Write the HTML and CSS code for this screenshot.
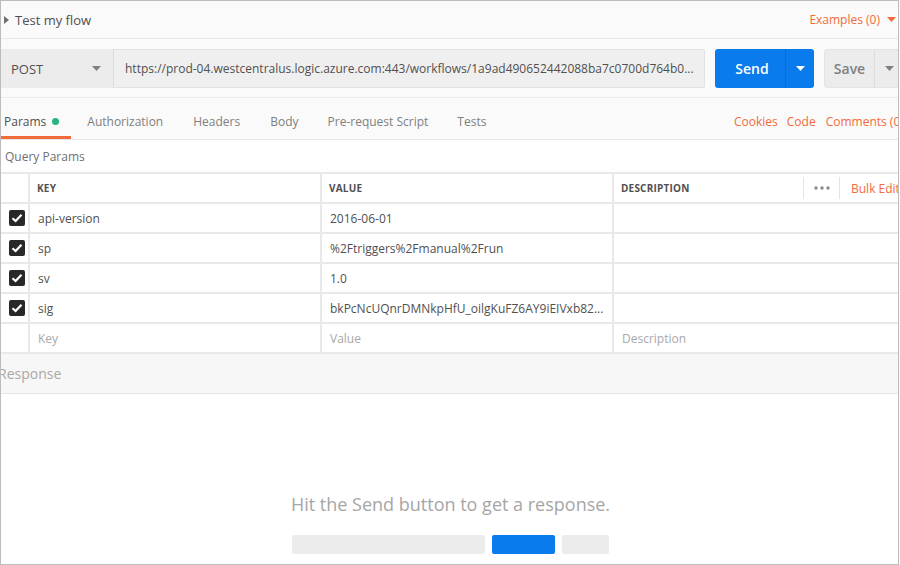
FILE: index.html
```html
<!DOCTYPE html>
<html>
<head>
<meta charset="utf-8">
<link rel="stylesheet" href="styles.css">
</head>
<body>
<div class="frame">
  <div class="topbar">
    <div class="title"><svg class="tri-right" width="6" height="8" viewBox="0 0 6 8"><path d="M0 0 L5 4 L0 8 Z" fill="#707070"/></svg><span>Test my flow</span></div>
    <div class="examples">Examples (0) <svg width="9" height="6" viewBox="0 0 9 6"><path d="M0 0 H9 L4.5 5 Z" fill="#f26b3a"/></svg></div>
  </div>

  <div class="urlrow">
    <div class="method"><span>POST</span><svg width="9" height="5" viewBox="0 0 9 5"><path d="M0 0 H9 L4.5 5 Z" fill="#808080"/></svg></div>
    <div class="url">https://prod-04.westcentralus.logic.azure.com:443/workflows/1a9ad490652442088ba7c0700d764b0...</div>
    <div class="send"><span class="send-label">Send</span><span class="send-drop"><svg width="9" height="5" viewBox="0 0 9 5"><path d="M0 0 H9 L4.5 5 Z" fill="#ffffff"/></svg></span></div>
    <div class="save"><span class="save-label">Save</span><span class="save-drop"><svg width="9" height="5" viewBox="0 0 9 5"><path d="M0 0 H9 L4.5 5 Z" fill="#808080"/></svg></span></div>
  </div>

  <div class="tabs">
    <div class="tabs-left">
      <div class="tab active">Params<span class="dot"></span></div>
      <div class="tab">Authorization</div>
      <div class="tab">Headers</div>
      <div class="tab">Body</div>
      <div class="tab">Pre-request Script</div>
      <div class="tab">Tests</div>
    </div>
    <div class="tabs-right">
      <span>Cookies</span><span>Code</span><span>Comments (0)</span>
    </div>
  </div>

  <div class="qp">Query Params</div>

  <div class="grid">
    <div class="cell"></div>
    <div class="cell head">KEY</div>
    <div class="cell head">VALUE</div>
    <div class="cell head desc-head">
      <span class="desc-label">DESCRIPTION</span>
      <span class="sep"></span>
      <span class="dots"><svg width="16" height="4" viewBox="0 0 16 4"><circle cx="2" cy="2" r="1.7" fill="#8a8a8a"/><circle cx="8" cy="2" r="1.7" fill="#8a8a8a"/><circle cx="14" cy="2" r="1.7" fill="#8a8a8a"/></svg></span>
      <span class="sep"></span>
      <span class="bulk">Bulk Edit</span>
    </div>

    <div class="cell cb"><span class="check"><svg width="12" height="10" viewBox="0 0 12 10"><path d="M1.5 5.2 L4.6 8 L10.5 1.8" fill="none" stroke="#fff" stroke-width="2.2"/></svg></span></div>
    <div class="cell">api-version</div>
    <div class="cell">2016-06-01</div>
    <div class="cell"></div>

    <div class="cell cb"><span class="check"><svg width="12" height="10" viewBox="0 0 12 10"><path d="M1.5 5.2 L4.6 8 L10.5 1.8" fill="none" stroke="#fff" stroke-width="2.2"/></svg></span></div>
    <div class="cell">sp</div>
    <div class="cell">%2Ftriggers%2Fmanual%2Frun</div>
    <div class="cell"></div>

    <div class="cell cb"><span class="check"><svg width="12" height="10" viewBox="0 0 12 10"><path d="M1.5 5.2 L4.6 8 L10.5 1.8" fill="none" stroke="#fff" stroke-width="2.2"/></svg></span></div>
    <div class="cell">sv</div>
    <div class="cell">1.0</div>
    <div class="cell"></div>

    <div class="cell cb"><span class="check"><svg width="12" height="10" viewBox="0 0 12 10"><path d="M1.5 5.2 L4.6 8 L10.5 1.8" fill="none" stroke="#fff" stroke-width="2.2"/></svg></span></div>
    <div class="cell">sig</div>
    <div class="cell">bkPcNcUQnrDMNkpHfU_oilgKuFZ6AY9iEIVxb82...</div>
    <div class="cell"></div>

    <div class="cell"></div>
    <div class="cell ph">Key</div>
    <div class="cell ph">Value</div>
    <div class="cell ph">Description</div>
  </div>

  <div class="response">Response</div>

  <div class="empty">
    <div class="msg">Hit the Send button to get a response.</div>
    <div class="skel">
      <span class="sk sk1"></span><span class="sk sk2"></span><span class="sk sk3"></span>
    </div>
  </div>
</div>
</body>
</html>
```

FILE: styles.css
```css
* { box-sizing: border-box; }
html, body { margin: 0; padding: 0; background: #ffffff; }
body { font-family: "Open Sans", "Noto Sans", sans-serif; color: #505050; }

.frame {
  width: 899px;
  height: 565px;
  border: 1px solid #bcbcbc;
  overflow: hidden;
  background: #fafafa;
  display: flex;
  flex-direction: column;
}

/* top bar */
.topbar {
  height: 38px;
  flex: 0 0 38px;
  display: flex;
  align-items: center;
  justify-content: space-between;
  border-bottom: 1px solid #e8e8e8;
  padding: 0 2px 0 3px;
}
.title { display: flex; align-items: center; font-size: 13px; color: #505050; }
.tri-right { margin-right: 5px; }
.examples { display: flex; align-items: center; gap: 7px; font-size: 12px; color: #f26b3a; }

/* url row */
.urlrow {
  flex: 0 0 59px;
  display: flex;
  align-items: flex-start;
  padding-top: 10px;
  border-bottom: 1px solid #ececec;
}
.urlrow > * { flex-shrink: 0; }
.method {
  width: 113px;
  height: 39px;
  background: #ececec;
  border-right: 1px solid #dcdcdc;
  display: flex;
  align-items: center;
  justify-content: space-between;
  padding: 0 12px 0 10px;
  font-size: 13px;
  color: #505050;
}
.url {
  width: 591px;
  height: 39px;
  background: #efefef;
  border: 1px solid #e2e2e2;
  border-left: none;
  border-radius: 0 2px 2px 0;
  display: flex;
  align-items: center;
  padding-left: 11px;
  font-size: 12px;
  color: #505050;
  white-space: nowrap;
  overflow: hidden;
}
.send {
  margin-left: 10px;
  width: 99px;
  height: 39px;
  background: #097bed;
  border-radius: 3px;
  display: flex;
  align-items: stretch;
  color: #fff;
}
.send-label {
  width: 70px;
  display: flex; align-items: center; justify-content: center;
  font-size: 14px; font-weight: 600;
  padding-left: 4px;
}
.send-drop {
  flex: 1;
  border-left: 1px solid #0a6cd2;
  display: flex; align-items: center; justify-content: center;
}
.save {
  margin-left: 10px;
  width: 90px;
  height: 39px;
  background: #ececec;
  border: 1px solid #e4e4e4;
  border-radius: 3px;
  display: flex;
  color: #808080;
}
.save-label {
  width: 49px;
  display: flex; align-items: center; justify-content: center;
  font-size: 14px; font-weight: 600;
}
.save-drop {
  width: 38px;
  border-left: 1px solid #dcdcdc;
  display: flex; align-items: center; padding-left: 10px;
}

/* tabs */
.tabs {
  flex: 0 0 42px;
  display: flex;
  border-bottom: 1px solid #e6e6e6;
}
.tabs-left { flex: 1; display: flex; }
.tab {
  display: flex;
  align-items: center;
  padding: 8px 15px 0;
  font-size: 12px;
  color: #808080;
  border-bottom: 3px solid transparent;
}
.tab:nth-child(2) { padding-left: 16px; }
.tab:nth-child(5) { padding-left: 14px; padding-right: 14px; }
.tab.active {
  padding-left: 3px;
  padding-right: 12px;
  color: #505050;
  border-bottom-color: #f26b3a;
}
.dot { width: 7px; height: 7px; border-radius: 50%; background: #26b47f; margin-left: 6px; }
.tabs-right {
  flex: 0 0 164px;
  min-width: 0;
  display: flex;
  align-items: center;
  gap: 9px;
  font-size: 12px;
  color: #f26b3a;
  white-space: nowrap;
  padding-top: 5px;
}
.tabs-right span { flex-shrink: 0; }
.tabs-right span:last-child { margin-left: 1px; }

/* query params */
.qp {
  flex: 0 0 32px;
  background: #fff;
  display: flex;
  align-items: center;
  padding-left: 4px;
  font-size: 12px;
  color: #707070;
}

/* grid table */
.grid {
  flex: 0 0 auto;
  display: grid;
  grid-template-columns: 27px 290px 290px 1fr;
  grid-auto-rows: 28px;
  gap: 2px;
  padding: 2px 0;
  background: #e9e9e9;
}
.cell {
  background: #fff;
  display: flex;
  align-items: center;
  padding-left: 8px;
  font-size: 12px;
  color: #505050;
  white-space: nowrap;
  overflow: hidden;
}
.cell.head { font-size: 10px; font-weight: 700; color: #505050; letter-spacing: 0.2px; padding-left: 7px; }
.desc-head { overflow: hidden; }
.desc-label { flex: 0 0 182px; }
.sep { flex: 0 0 1px; height: 22px; background: #e4e4e4; }
.dots { flex: 0 0 35px; display: flex; justify-content: center; align-items: center; }
.bulk { font-size: 12px; font-weight: 400; letter-spacing: 0; color: #f26b3a; padding-left: 11px; white-space: nowrap; }
.cell.cb { padding-left: 8px; }
.check {
  width: 16px; height: 16px;
  background: #282828;
  border-radius: 2px;
  display: flex; align-items: center; justify-content: center;
}
.cell.ph { color: #a8a8a8; }

/* response */
.response {
  flex: 0 0 40px;
  background: #f7f7f7;
  border-bottom: 1px solid #e6e6e6;
  display: flex;
  align-items: center;
  margin-left: -3px;
  font-size: 14px;
  color: #a8a8a8;
}

.empty {
  flex: 1;
  background: #fff;
  display: flex;
  flex-direction: column;
  align-items: center;
  padding-top: 98px;
}
.msg { font-size: 18px; color: #a6a6a6; margin-left: 2px; }
.skel { display: flex; gap: 7px; margin-top: 19px; margin-left: 2px; }
.sk { height: 19px; border-radius: 2px; background: #ececec; }
.sk1 { width: 193px; }
.sk2 { width: 63px; background: #097bed; }
.sk3 { width: 47px; }
```
